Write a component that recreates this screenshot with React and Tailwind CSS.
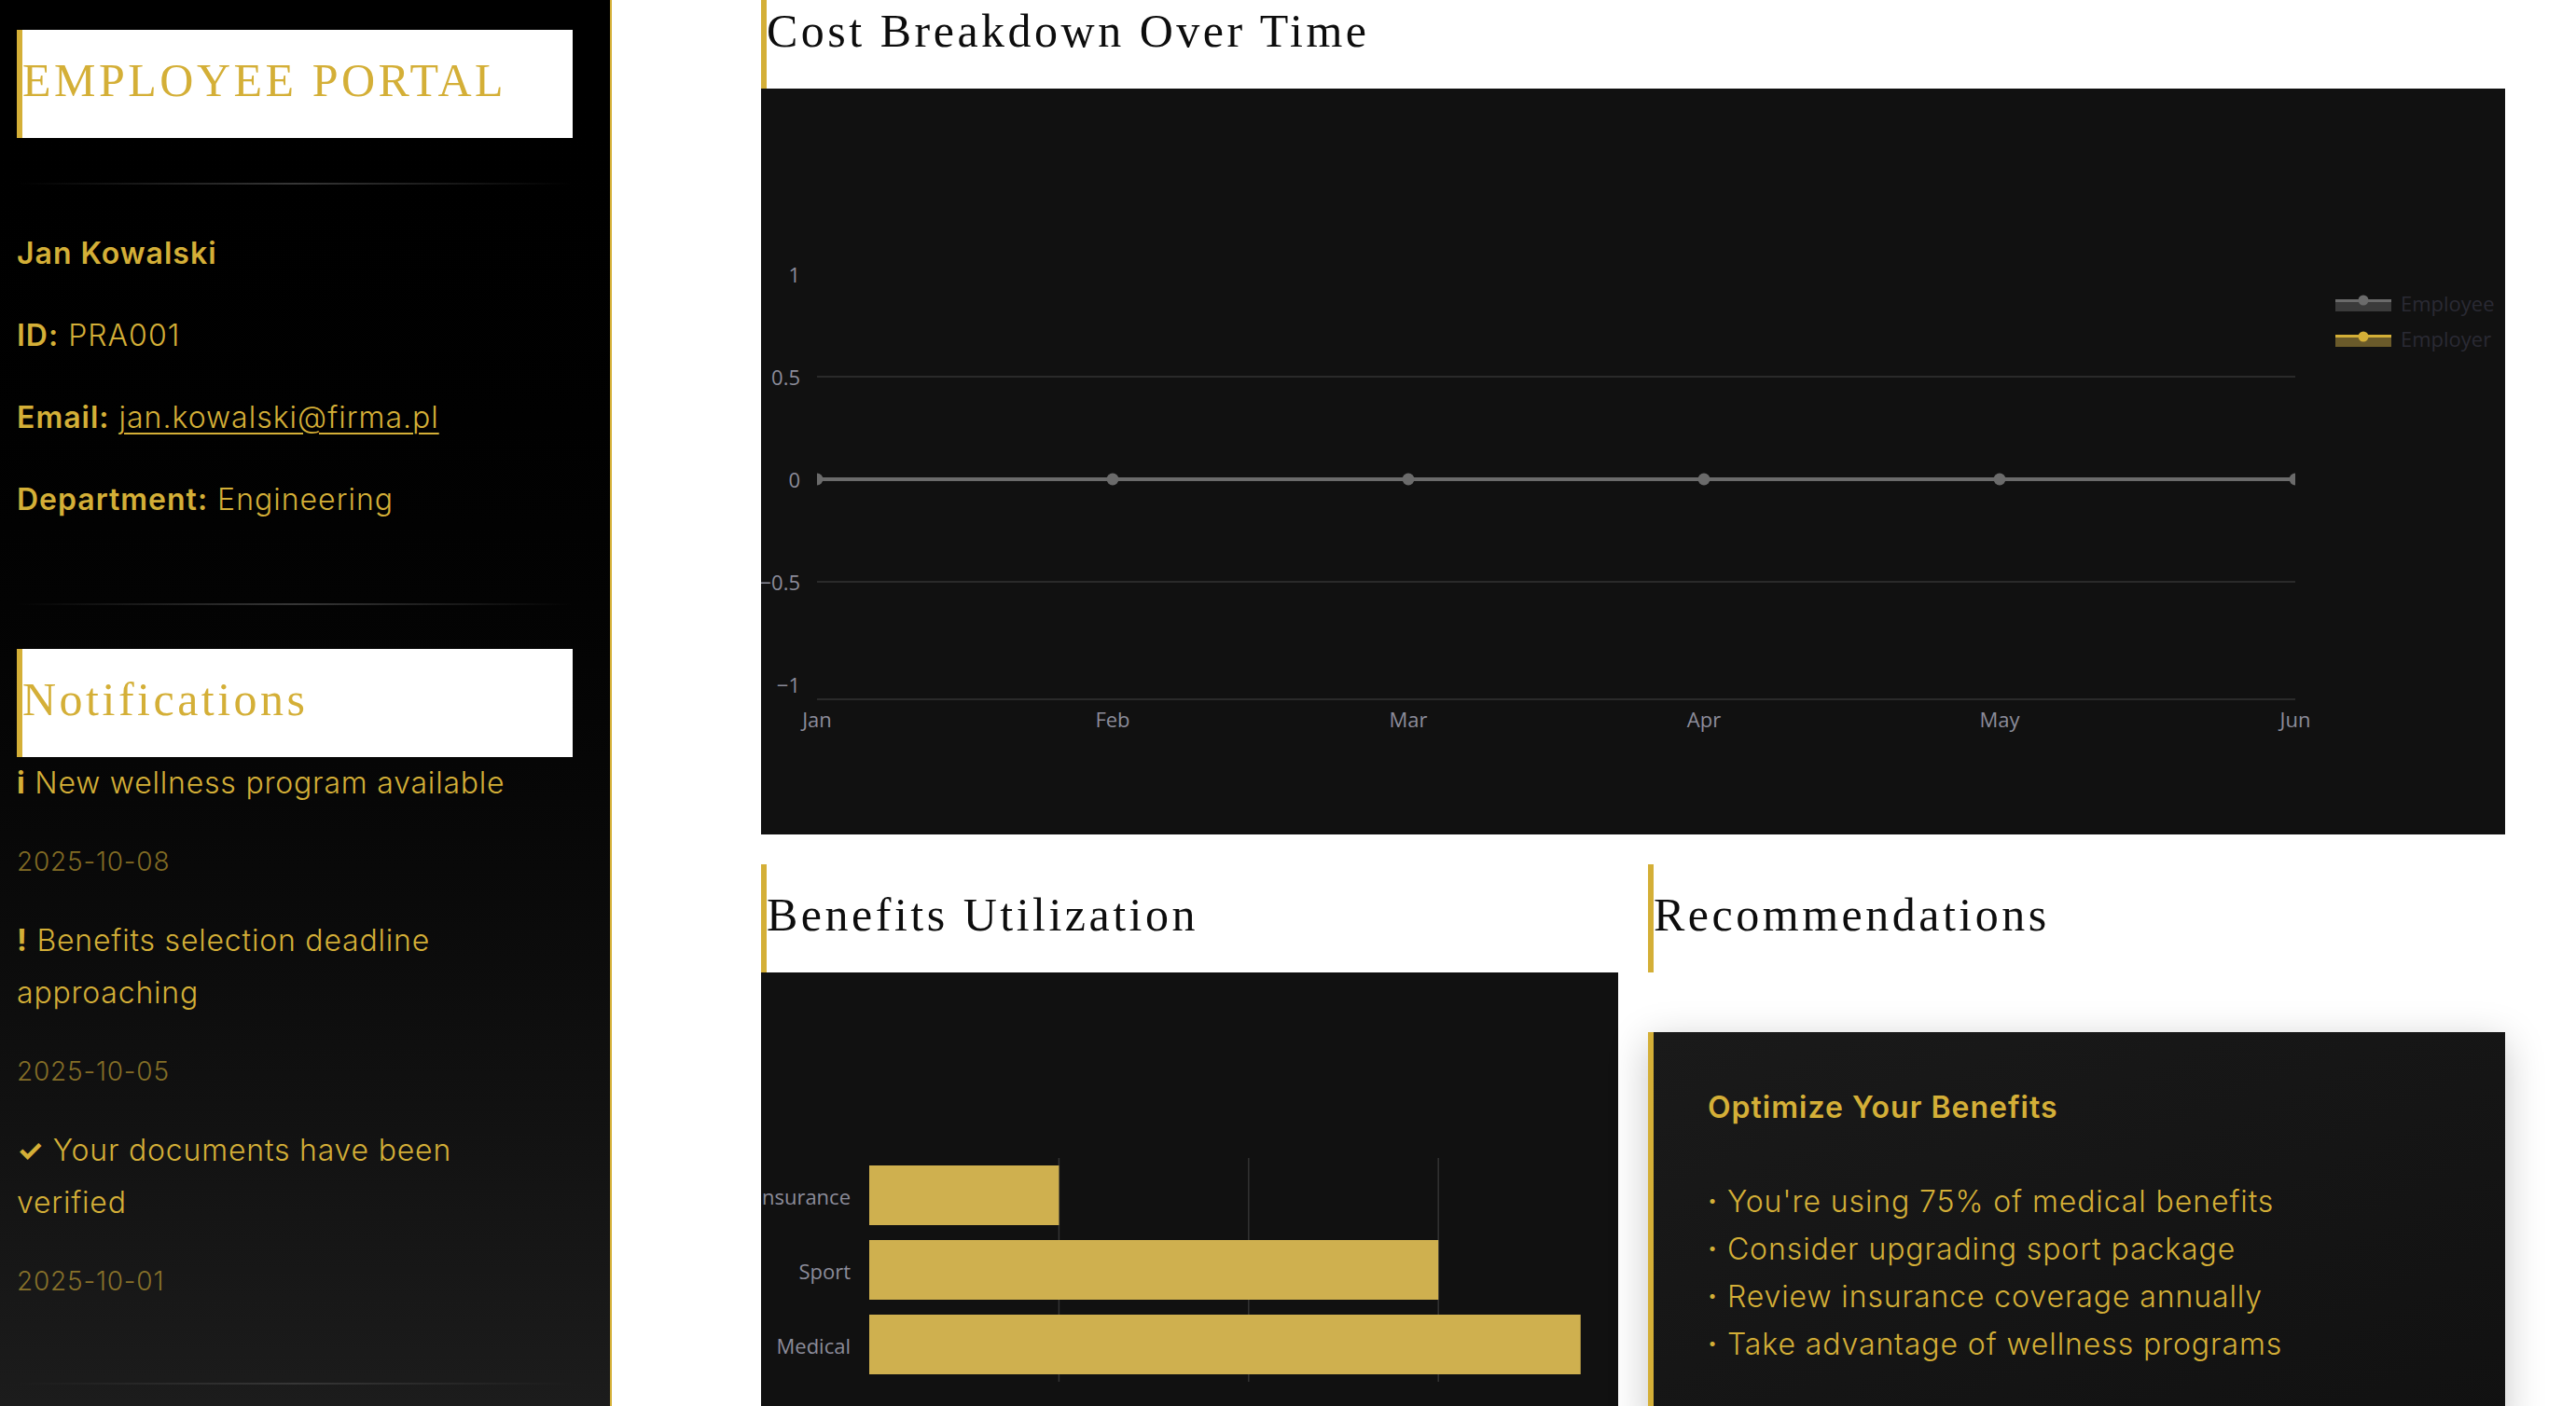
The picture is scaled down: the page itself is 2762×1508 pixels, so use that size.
import React from "react"

const months = ["Jan", "Feb", "Mar", "Apr", "May", "Jun"]
const yTicks = [
  [1, "1"],
  [0.5, "0.5"],
  [0, "0"],
  [-0.5, "−0.5"],
  [-1, "−1"],
]

const notifications = [
  { icon: "i", text: "New wellness program available", date: "2025-10-08" },
  { icon: "!", text: ["Benefits selection deadline", "approaching"], date: "2025-10-05" },
  { icon: "✓", text: ["Your documents have been", "verified"], date: "2025-10-01" },
]

const benefits = [
  { label: "Insurance", value: 20, y: 207 },
  { label: "Sport", value: 60, y: 287 },
  { label: "Medical", value: 75, y: 367 },
]

const tips = [
  "You're using 75% of medical benefits",
  "Consider upgrading sport package",
  "Review insurance coverage annually",
  "Take advantage of wellness programs",
]

function Heading({ children, gold, first }) {
  return (
    <div
      className={`bg-white border-l-[6px] border-[#d4af37] ${
        first ? "h-[95px] pt-[3px]" : "h-[116px] pt-[24px]"
      }`}
    >
      <h2
        className={`font-['Liberation_Serif',serif] text-[50px] leading-[60px] tracking-[3.5px] font-normal ${
          gold ? "text-[#d4af37]" : "text-[#0d0d0d]"
        }`}
      >
        {children}
      </h2>
    </div>
  )
}

function Divider({ className }) {
  return <div className={`h-[2px] bg-linear-to-r from-transparent via-[#363636] to-transparent ${className}`} />
}

function Sidebar() {
  return (
    <aside className="w-[656px] shrink-0 border-r-2 border-[#d4af37] bg-linear-to-b from-black to-[#1c1c1c] pl-[18px] pr-[40px] pt-[32px] text-[#d4af37]">
      <Heading gold>EMPLOYEE PORTAL</Heading>
      <Divider className="mt-[48px]" />

      <div className="mt-[46px] flex flex-col gap-[32px] text-[32px] leading-[56px] font-light tracking-[1px]">
        <p className="font-semibold">Jan Kowalski</p>
        <p><span className="font-semibold">ID:</span> PRA001</p>
        <p>
          <span className="font-semibold">Email:</span>{" "}
          <a href="#" className="underline underline-offset-[5px] decoration-2">jan.kowalski@firma.pl</a>
        </p>
        <p><span className="font-semibold">Department:</span> Engineering</p>
      </div>

      <Divider className="mt-[83px]" />
      <div className="mt-[47px]">
        <Heading gold>Notifications</Heading>
      </div>

      <div className="flex flex-col gap-[32px] tracking-[0.8px]">
        {notifications.map((n) => (
          <div key={n.date} className="flex flex-col gap-[32px]">
            <p className="text-[32px] leading-[56px] font-light">
              <span className="font-bold">{n.icon}</span>{" "}
              {Array.isArray(n.text) ? (
                <>
                  {n.text[0]}
                  <br />
                  {n.text[1]}
                </>
              ) : (
                n.text
              )}
            </p>
            <p className="text-[28px] leading-[49px] font-light text-[#d4af37]/60">{n.date}</p>
          </div>
        ))}
      </div>

      <Divider className="mt-[84px]" />
    </aside>
  )
}

function CostChart() {
  const xs = months.map((_, i) => 60 + i * 317)
  const yOf = (v) => 419 - v * 220
  const label = { fontFamily: "'Open Sans', sans-serif", fontSize: 22 }

  return (
    <div className="h-[800px] bg-[#111111]">
      <svg width="1870" height="800" viewBox="0 0 1870 800" className="block">
        <defs>
          <clipPath id="plot-area">
            <rect x="60" y="150" width="1585" height="505" />
          </clipPath>
        </defs>

        {[0.5, -0.5].map((v) => (
          <line key={v} x1="60" x2="1645" y1={yOf(v)} y2={yOf(v)} stroke="#333333" strokeWidth="1.5" />
        ))}
        <line x1="60" x2="1645" y1="655" y2="655" stroke="#333333" strokeWidth="1.5" />

        {/* employer sits under employee, both are flat at zero */}
        <g clipPath="url(#plot-area)">
          <polyline points={xs.map((x) => `${x},419`).join(" ")} fill="none" stroke="#6b6b6b" strokeWidth="4" />
          {xs.map((x) => (
            <circle key={x} cx={x} cy="419" r="6.5" fill="#6b6b6b" />
          ))}
        </g>

        {yTicks.map(([v, t]) => (
          <text key={t} x="42" y={yOf(v)} textAnchor="end" dominantBaseline="central" fill="#8c8c9a" {...label}>
            {t}
          </text>
        ))}
        {months.map((m, i) => (
          <text key={m} x={xs[i]} y="676" textAnchor="middle" dominantBaseline="central" fill="#8c8c9a" {...label}>
            {m}
          </text>
        ))}

        <rect x="1688" y="226" width="60" height="13" fill="#3b3b3b" />
        <line x1="1688" x2="1748" y1="227.5" y2="227.5" stroke="#6b6b6b" strokeWidth="3" />
        <circle cx="1718" cy="227" r="5.5" fill="#6b6b6b" />
        <text x="1758" y="230" dominantBaseline="central" fill="#2a2a34" {...label}>Employee</text>

        <rect x="1688" y="264" width="60" height="13" fill="#6a5a2a" />
        <line x1="1688" x2="1748" y1="265.5" y2="265.5" stroke="#d4af37" strokeWidth="3" />
        <circle cx="1718" cy="266" r="5.5" fill="#d4af37" />
        <text x="1758" y="268" dominantBaseline="central" fill="#2a2a34" {...label}>Employer</text>
      </svg>
    </div>
  )
}

function BenefitsChart() {
  const unit = 10.17
  return (
    <div className="h-[520px] bg-[#111111] overflow-hidden">
      <svg width="919" height="520" viewBox="0 0 919 520" className="block">
        {[20, 40, 60].map((v) => (
          <line key={v} x1={116 + v * unit} x2={116 + v * unit} y1="199" y2="439" stroke="#343434" strokeWidth="1.5" />
        ))}
        {benefits.map((b) => (
          <g key={b.label}>
            <rect x="116" y={b.y} width={b.value * unit} height="64" fill="#cfb04f" />
            <text
              x="96"
              y={b.y + 33}
              textAnchor="end"
              dominantBaseline="central"
              fill="#8c8c9a"
              fontFamily="'Open Sans', sans-serif"
              fontSize="22"
            >
              {b.label}
            </text>
          </g>
        ))}
      </svg>
    </div>
  )
}

export default function App() {
  return (
    <div className="flex h-[1508px] overflow-hidden bg-white font-['Inter',sans-serif]">
      <Sidebar />

      <main className="flex-1 pl-[160px] pr-[76px]">
        <Heading first>Cost Breakdown Over Time</Heading>
        <CostChart />

        <div className="mt-[32px] grid grid-cols-2 gap-[32px]">
          <div>
            <Heading>Benefits Utilization</Heading>
            <BenefitsChart />
          </div>

          <div>
            <Heading>Recommendations</Heading>
            <div className="mt-[64px] border-l-[6px] border-[#d4af37] bg-linear-to-br from-[#1a1a1a] to-[#111111] pl-[58px] pt-[62px] pb-[64px] text-[#d4af37] shadow-[0_10px_40px_rgba(0,0,0,0.22)]">
              <h4 className="text-[32px] leading-[38px] font-semibold tracking-[1px]">Optimize Your Benefits</h4>
              <ul className="mt-[56px] text-[32px] leading-[51px] font-light tracking-[0.9px]">
                {tips.map((t) => (
                  <li key={t} className="flex items-center">
                    <span className="mr-[10px] text-[30px] font-bold">·</span>
                    {t}
                  </li>
                ))}
              </ul>
            </div>
          </div>
        </div>
      </main>
    </div>
  )
}
